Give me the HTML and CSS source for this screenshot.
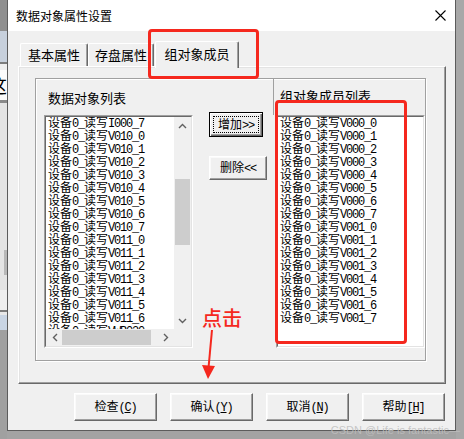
FILE: index.html
```html
<!DOCTYPE html>
<html lang="zh-CN">
<head>
  <meta charset="UTF-8">
  <title>数据对象属性设置</title>
  <link rel="stylesheet" href="styles.css">
</head>
<body>

  <div class="bg-left">
    <div class="st st-dark"></div>
    <div class="st st-blue"></div>
    <div class="st st-line"></div>
    <div class="st st-light"></div>
    <div class="st st-text"><span>这</span></div>
    <div class="st st-line3"></div>
    <div class="st st-panel"><div class="st-bar"></div></div>
    <div class="st st-light2"></div>
    <div class="st st-line"></div>
    <div class="st st-light3"></div>
    <div class="st st-blue2"></div>
    <div class="st st-rest"></div>
  </div>

  <div class="dialog">
    <div class="titlebar">
      <span class="title">数据对象属性设置</span>
      <svg class="close" width="11" height="11" viewBox="0 0 11 11">
        <path d="M0.5 0.5 L10.5 10.5 M10.5 0.5 L0.5 10.5" stroke="#000" stroke-width="1.1" fill="none"/>
      </svg>
    </div>

    <div class="content">
      <div class="tabs">
        <div class="tab tab-1">基本属性</div>
        <div class="tab tab-2">存盘属性</div>
        <div class="tab tab-3 active">组对象成员</div>
      </div>

      <div class="panel">
        <div class="frame">
          <div class="col-left">
            <div class="head">数据对象列表</div>
            <div class="list">
              <div class="list-in list-scroll">
                <div class="items" id="leftItems"></div>
                <div class="vscroll">
                  <div class="sb-btn">
                    <svg width="9" height="6" viewBox="0 0 9 6"><polyline points="1,5 4.5,1.5 8,5" fill="none" stroke="#606060" stroke-width="1.4"/></svg>
                  </div>
                  <div class="v-track"><div class="v-thumb"></div></div>
                  <div class="sb-btn">
                    <svg width="9" height="6" viewBox="0 0 9 6"><polyline points="1,1 4.5,4.5 8,1" fill="none" stroke="#606060" stroke-width="1.4"/></svg>
                  </div>
                </div>
                <div class="hscroll">
                  <div class="sb-btn">
                    <svg width="6" height="9" viewBox="0 0 6 9"><polyline points="5,1 1.5,4.5 5,8" fill="none" stroke="#606060" stroke-width="1.4"/></svg>
                  </div>
                  <div class="h-track"><div class="h-thumb"></div></div>
                  <div class="sb-btn">
                    <svg width="6" height="9" viewBox="0 0 6 9"><polyline points="1,1 4.5,4.5 1,8" fill="none" stroke="#606060" stroke-width="1.4"/></svg>
                  </div>
                </div>
                <div class="corner"></div>
              </div>
            </div>
          </div>

          <div class="col-btns">
            <button class="btn btn-add"><span class="cn">增加</span>&gt;&gt;</button>
            <button class="btn btn-del"><span class="cn">删除</span>&lt;&lt;</button>
          </div>

          <div class="col-right">
            <div class="head head-right">组对象成员列表</div>
            <div class="list list-right">
              <div class="list-in">
                <div class="items" id="rightItems"></div>
              </div>
            </div>
          </div>
        </div>
      </div>

      <div class="actions">
        <button class="btn btn-act"><span class="cn">检查</span>(<u>C</u>)</button>
        <button class="btn btn-act"><span class="cn">确认</span>(<u>Y</u>)</button>
        <button class="btn btn-act"><span class="cn">取消</span>(<u>N</u>)</button>
        <button class="btn btn-act"><span class="cn">帮助</span>[<u>H</u>]</button>
      </div>
    </div>
  </div>

  <div class="bg-right"></div>

  <!-- annotations drawn over the screenshot -->
  <div class="mark mark-tab"></div>
  <div class="mark mark-list"></div>
  <div class="click-note">点击</div>
  <svg class="click-arrow" width="20" height="52" viewBox="0 0 20 52">
    <path d="M12 0 L8.5 38" stroke="#f5281e" stroke-width="2" fill="none"/>
    <polygon points="2,35 15,36 8,49" fill="#f5281e"/>
  </svg>
  <div class="watermark">CSDN @Life is fantastic—</div>

  <script>
    const leftCodes = ['I000_7'];
    for (let i = 0; i < 8; i++) leftCodes.push('V010_' + i);
    for (let i = 0; i < 7; i++) leftCodes.push('V011_' + i);
    leftCodes.push('VWB020');

    const rightCodes = [];
    for (let i = 0; i < 8; i++) rightCodes.push('V000_' + i);
    for (let i = 0; i < 8; i++) rightCodes.push('V001_' + i);

    function fill(id, codes) {
      const box = document.getElementById(id);
      codes.forEach(code => {
        const row = document.createElement('div');
        row.className = 'row';
        row.innerHTML = `<span class="cn">设备</span>0_<span class="cn">读写</span>${code}`;
        box.appendChild(row);
      });
    }

    fill('leftItems', leftCodes);
    fill('rightItems', rightCodes);
  </script>

</body>
</html>
```

FILE: styles.css
```css
body {
  margin: 0;
  width: 464px;
  height: 439px;
  overflow: hidden;
  display: flex;
  position: relative;
  background: #a3a3a3;
  font-family: "Noto Sans CJK SC", sans-serif;
  color: #000;
}

/* window behind the dialog, left edge */
.bg-left {
  width: 7px;
  display: flex;
  flex-direction: column;
  overflow: hidden;
}
.st { flex: none; }
.st-dark { height: 31px; background: #8f8f8f; }
.st-blue { height: 31px; background: #c7d0dc; }
.st-line { height: 2px; background: #7c7c7c; }
.st-light { height: 6px; background: #eeeeee; }
.st-text {
  height: 30px;
  background: #fbfbfb;
  overflow: hidden;
  font-size: 19px;
  line-height: 30px;
  white-space: nowrap;
}
.st-text span { margin-left: -12px; }
.st-line3 { height: 3px; background: #8a8a8a; }
.st-panel {
  height: 187px;
  background: #e4e4e4;
  display: flex;
  justify-content: flex-end;
  padding-top: 147px;
  box-sizing: border-box;
}
.st-bar { width: 3px; height: 25px; background: #b8b8b8; }
.st-light2 { height: 20px; background: #efefef; }
.st-light3 { height: 3px; background: #e8e8e8; }
.st-blue2 { height: 15px; background: #c9d5e4; }
.st-rest { flex: 1; background: #a0a0a0; }

.bg-right {
  flex: 1;
  background: #a8a8a8;
}

/* dialog */
.dialog {
  width: 449px;
  height: 431px;
  box-sizing: border-box;
  border: 1px solid #5c5c5c;
  border-top: 0;
  display: flex;
  flex-direction: column;
  background: #f0f0f0;
}
.titlebar {
  height: 31px;
  flex: none;
  background: #fff;
  display: flex;
  align-items: center;
  justify-content: space-between;
  padding: 0 9px 0 8px;
  font-size: 12px;
}
.title { line-height: 16px; }

.content {
  flex: 1;
  padding: 0 9px 0 10px;
  display: flex;
  flex-direction: column;
}

/* tabs */
.tabs {
  height: 35px;
  flex: none;
  display: flex;
  align-items: flex-end;
  padding-left: 2px;
}
.tab {
  height: 23px;
  box-sizing: border-box;
  border-top: 1px solid #fff;
  border-left: 1px solid #fff;
  border-right: 1px solid #696969;
  box-shadow: inset -1px 0 #a0a0a0;
  border-radius: 2px 2px 0 0;
  font-size: 13px;
  line-height: 21px;
  text-align: center;
  background: #f0f0f0;
}
.tab-1 { width: 68px; }
.tab-2 { width: 66px; }
.tab-3 { width: 84px; margin-left: 1px; }
.tab.active {
  height: 27px;
  margin-bottom: -2px;
  line-height: 24px;
  position: relative;
  z-index: 1;
}

.panel {
  height: 318px;
  flex: none;
  box-sizing: border-box;
  border: 1px solid;
  border-color: #fff #696969 #696969 #fff;
  box-shadow: inset -1px -1px #a0a0a0, inset 1px 1px #e3e3e3;
  padding: 11px 0 0 16px;
}

.frame {
  width: 391px;
  height: 283px;
  box-sizing: border-box;
  border: 1px solid #a0a0a0;
  box-shadow: 1px 1px 0 #fff, inset 1px 1px 0 #fff;
  display: flex;
  padding-left: 8px;
}

.col-left { width: 149px; }
.head {
  height: 36px;
  display: flex;
  align-items: center;
  padding-left: 4px;
  font-size: 13px;
}
.head-right {
  box-sizing: border-box;
  border-left: 1px solid #a0a0a0;
  padding: 0 0 4px 6px;
}

.list {
  width: 149px;
  height: 233px;
  box-sizing: border-box;
  border: 1px solid;
  border-color: #a0a0a0 #fff #fff #a0a0a0;
}
.list-in {
  height: 100%;
  box-sizing: border-box;
  border: 1px solid;
  border-color: #696969 #e3e3e3 #e3e3e3 #696969;
  background: #fff;
  overflow: hidden;
}
.list-scroll {
  display: grid;
  grid-template-columns: 1fr 17px;
  grid-template-rows: 1fr 17px;
}
.items {
  padding-left: 2px;
  margin-top: -2px;
  overflow: hidden;
}
.list-right .items { overflow: visible; }
.row {
  height: 13px;
  white-space: nowrap;
  font: 12px/13px "Liberation Mono", monospace;
  letter-spacing: -1.2px;
}
.cn {
  font: 12px/13px "Noto Sans CJK SC", sans-serif;
  letter-spacing: 0;
}

/* scrollbars */
.vscroll {
  display: flex;
  flex-direction: column;
  background: #f0f0f0;
}
.hscroll {
  display: flex;
  background: #f0f0f0;
}
.sb-btn {
  width: 17px;
  height: 17px;
  flex: none;
  display: flex;
  align-items: center;
  justify-content: center;
}
.v-track { flex: 1; }
.v-thumb {
  margin: 45px auto 0;
  width: 15px;
  height: 66px;
  background: #cdcdcd;
}
.h-track { flex: 1; display: flex; align-items: center; }
.h-thumb {
  width: 89px;
  height: 15px;
  margin-left: -1px;
  background: #cdcdcd;
}
.corner { background: #f0f0f0; }

/* middle buttons */
.col-btns {
  width: 58px;
  margin-left: 16px;
  padding-top: 33px;
  display: flex;
  flex-direction: column;
  align-items: flex-start;
  gap: 19px;
}
.col-right {
  width: 152px;
  margin-left: 6px;
}
.list-right { margin-left: 3px; }

.btn {
  box-sizing: border-box;
  padding: 0;
  margin: 0;
  background: #f0f0f0;
  border: 1px solid;
  border-color: #fff #696969 #696969 #fff;
  box-shadow: inset -1px -1px #a0a0a0, inset 1px 1px #fafafa;
  font: 12px/13px "Liberation Mono", monospace;
  letter-spacing: -1.2px;
  color: #000;
  white-space: nowrap;
}
.btn u { text-underline-offset: 1px; }
.btn-add {
  width: 54px;
  height: 25px;
  position: relative;
  border-color: #000;
  box-shadow: inset 1px 1px #fff, inset -1px -1px #696969, inset -2px -2px #a0a0a0;
}
.btn-add::after {
  content: "";
  position: absolute;
  inset: 3px;
  border: 1px dotted #000;
}
.btn-del {
  width: 58px;
  height: 24px;
}

/* bottom buttons */
.actions {
  display: flex;
  justify-content: flex-end;
  gap: 13px;
  margin-top: 9px;
  padding-right: 1px;
}
.btn-act {
  width: 83px;
  height: 28px;
}

/* annotations */
.mark {
  position: absolute;
  box-sizing: border-box;
  border: 3px solid #f5281e;
  border-radius: 4px;
}
.mark-tab { left: 148px; top: 29px; width: 111px; height: 50px; }
.mark-list { left: 275px; top: 100px; width: 132px; height: 244px; }
.click-note {
  position: absolute;
  left: 202px;
  top: 304px;
  font-size: 20px;
  line-height: 28px;
  font-weight: 500;
  color: #f5281e;
}
.click-arrow {
  position: absolute;
  left: 200px;
  top: 330px;
}
.watermark {
  position: absolute;
  right: 4px;
  bottom: 2px;
  font: 11px/13px "Liberation Sans", sans-serif;
  color: rgba(190, 190, 190, 0.85);
}
```
